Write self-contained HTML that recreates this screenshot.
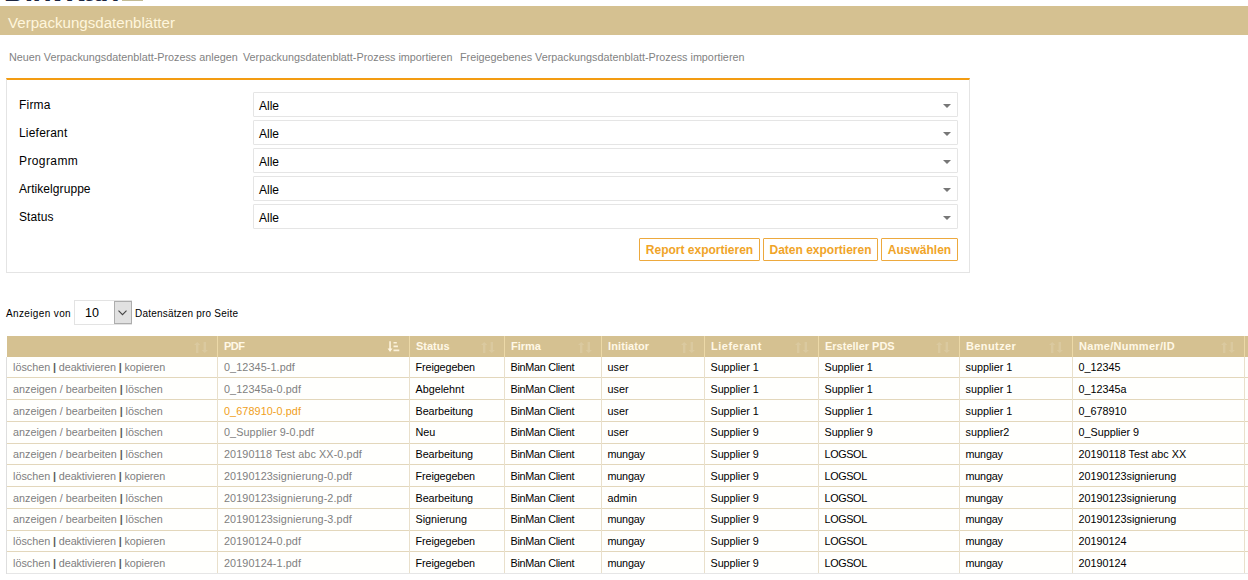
<!DOCTYPE html><html lang="de"><head><meta charset="utf-8"><title>Verpackungsdatenblätter</title><style>
html,body{margin:0;padding:0;background:#fff;}
body{width:1248px;height:580px;overflow:hidden;position:relative;font-family:"Liberation Sans",sans-serif;color:#000;}
.abs{position:absolute;}
#logo{left:4px;top:-26px;font-size:32px;font-weight:bold;color:#1b2440;line-height:32px;white-space:nowrap;width:130px;height:32px;}
#logo span{position:absolute;top:0;transform-origin:0 0;display:block;}
#logosq{left:122px;top:0;width:21px;height:1px;background:#c2bb94;}
#bar{left:0;top:6px;width:1248px;height:29px;background:#d5c191;}
#title{left:8px;top:14px;font-size:15.1px;line-height:18px;color:#fff6dd;white-space:nowrap;}
.lnk{top:50px;font-size:10.8px;line-height:14px;color:#828282;white-space:nowrap;}
#box{left:6px;top:78px;width:962px;height:192px;border:1px solid #e4e4e4;border-top:2px solid #f39c12;}
.lbl{left:19px;letter-spacing:.2px;font-size:12px;line-height:14px;white-space:nowrap;}
.sel{left:253px;width:703px;height:23px;border:1px solid #e5e5e5;border-radius:1px;background:#fff;}
.sel span{position:absolute;left:5px;top:6px;font-size:12px;line-height:14px;}
.sel i{position:absolute;right:6px;top:11px;width:0;height:0;border-left:4px solid transparent;border-right:4px solid transparent;border-top:4px solid #777;}
.btn{top:238px;height:21px;border:1px solid #eda93e;border-radius:1px;font-size:12px;font-weight:bold;color:#f0a428;line-height:23px;text-align:center;white-space:nowrap;background:#fff;}
#anz{left:6px;top:307px;font-size:10px;line-height:13px;white-space:nowrap;letter-spacing:0.37px;}
#anz2{left:135px;top:307px;font-size:10px;line-height:13px;white-space:nowrap;letter-spacing:0.2px;}
#psel{left:74px;top:300px;width:56px;height:23px;border:1px solid #e3e3e3;background:#fff;}
#psel span{position:absolute;left:10px;top:5px;font-size:12.5px;line-height:14px;}
#psel b{position:absolute;left:39px;top:0px;width:16px;height:21px;border:1px solid #adadad;background:#e1e1e1;}
#thead{left:7px;top:336px;width:1241px;height:21px;background:#d5c191;}
.th{top:336px;height:21px;font-size:11px;font-weight:bold;color:#fff8e6;line-height:21px;white-space:nowrap;}
.vsep{top:357px;width:1px;height:217px;background:#e9e0cb;}
.vseph{top:336px;width:1px;height:21px;background:#ecd9a8;}
.hsep{left:7px;width:1241px;height:1px;background:#e3d7bb;}
.td{font-size:10.8px;line-height:13px;white-space:nowrap;color:#000;}
.td a{color:#808080;}
.td .bar{color:#5a5a5a;font-weight:bold;margin:0 2.8px;letter-spacing:0;}
.td.a .n{letter-spacing:-0.1px;}
.td.g{color:#808080;letter-spacing:.1px;}
.td.o{color:#f0a020;letter-spacing:.1px;}
.si{top:342px;width:14px;height:11px;opacity:.13;}
</style></head><body>
<div id="logo" class="abs"><span style="left:0;transform:scaleX(.84)">B</span><span style="left:20.4px">i</span><span style="left:28.3px">n</span><span style="left:47.8px;transform:scaleX(1.32)">M</span><span style="left:79.2px">a</span><span style="left:96px">n</span></div><div id="logosq" class="abs"></div>
<div id="bar" class="abs"></div><div id="title" class="abs">Verpackungsdatenblätter</div>
<div class="abs lnk" style="left:9px">Neuen Verpackungsdatenblatt-Prozess anlegen</div>
<div class="abs lnk" style="left:243px">Verpackungsdatenblatt-Prozess importieren</div>
<div class="abs lnk" style="left:460px">Freigegebenes Verpackungsdatenblatt-Prozess importieren</div>
<div id="box" class="abs"></div>
<div class="abs lbl" style="top:98px;letter-spacing:0.2px">Firma</div>
<div class="abs sel" style="top:92px"><span>Alle</span><i></i></div>
<div class="abs lbl" style="top:126px;letter-spacing:0.2px">Lieferant</div>
<div class="abs sel" style="top:120px"><span>Alle</span><i></i></div>
<div class="abs lbl" style="top:154px;letter-spacing:0.4px">Programm</div>
<div class="abs sel" style="top:148px"><span>Alle</span><i></i></div>
<div class="abs lbl" style="top:182px;letter-spacing:0.07px">Artikelgruppe</div>
<div class="abs sel" style="top:176px"><span>Alle</span><i></i></div>
<div class="abs lbl" style="top:210px;letter-spacing:0.1px">Status</div>
<div class="abs sel" style="top:204px"><span>Alle</span><i></i></div>
<div class="abs btn" style="left:639px;width:119px">Report exportieren</div>
<div class="abs btn" style="left:763px;width:113px">Daten exportieren</div>
<div class="abs btn" style="left:881px;width:75px">Auswählen</div>
<div id="anz" class="abs">Anzeigen von</div>
<div id="psel" class="abs"><span>10</span><b><svg width="16" height="21" viewBox="0 0 16 21"><path d="M3.5 8.6 L7.5 12.6 L11.5 8.6" fill="none" stroke="#444" stroke-width="1.1"/></svg></b></div>
<div id="anz2" class="abs">Datensätzen pro Seite</div>
<div id="thead" class="abs"></div><div class="abs" style="left:7px;top:357px;width:1241px;height:216px;background:#fffffd"></div>
<div class="abs th" style="left:224px;letter-spacing:-0.5px">PDF</div>
<div class="abs th" style="left:416px;letter-spacing:0px">Status</div>
<div class="abs th" style="left:511px;letter-spacing:0px">Firma</div>
<div class="abs th" style="left:608px;letter-spacing:0.1px">Initiator</div>
<div class="abs th" style="left:711px;letter-spacing:0.5px">Lieferant</div>
<div class="abs th" style="left:825px;letter-spacing:0px">Ersteller PDS</div>
<div class="abs th" style="left:966px;letter-spacing:0.4px">Benutzer</div>
<div class="abs th" style="left:1079px;letter-spacing:0.3px">Name/Nummer/ID</div>
<svg class="abs si" style="left:194px" viewBox="0 0 14 11"><path d="M2 11V3H0L3.2 0l3.2 3h-2v8zM9.6 0v8h-2l3.2 3L14 8h-2V0z" fill="#fff"/></svg>
<svg class="abs si" style="left:481px" viewBox="0 0 14 11"><path d="M2 11V3H0L3.2 0l3.2 3h-2v8zM9.6 0v8h-2l3.2 3L14 8h-2V0z" fill="#fff"/></svg>
<svg class="abs si" style="left:578px" viewBox="0 0 14 11"><path d="M2 11V3H0L3.2 0l3.2 3h-2v8zM9.6 0v8h-2l3.2 3L14 8h-2V0z" fill="#fff"/></svg>
<svg class="abs si" style="left:681px" viewBox="0 0 14 11"><path d="M2 11V3H0L3.2 0l3.2 3h-2v8zM9.6 0v8h-2l3.2 3L14 8h-2V0z" fill="#fff"/></svg>
<svg class="abs si" style="left:795px" viewBox="0 0 14 11"><path d="M2 11V3H0L3.2 0l3.2 3h-2v8zM9.6 0v8h-2l3.2 3L14 8h-2V0z" fill="#fff"/></svg>
<svg class="abs si" style="left:936px" viewBox="0 0 14 11"><path d="M2 11V3H0L3.2 0l3.2 3h-2v8zM9.6 0v8h-2l3.2 3L14 8h-2V0z" fill="#fff"/></svg>
<svg class="abs si" style="left:1049px" viewBox="0 0 14 11"><path d="M2 11V3H0L3.2 0l3.2 3h-2v8zM9.6 0v8h-2l3.2 3L14 8h-2V0z" fill="#fff"/></svg>
<svg class="abs si" style="left:1221px" viewBox="0 0 14 11"><path d="M2 11V3H0L3.2 0l3.2 3h-2v8zM9.6 0v8h-2l3.2 3L14 8h-2V0z" fill="#fff"/></svg>
<svg class="abs" style="left:386px;top:340px;width:14px;height:13px" viewBox="0 0 14 13"><path d="M3.3 1.3h1.5v7.2h1.7L4.05 11.9 1.6 8.5h1.7z" fill="#fff6e2"/><path d="M7.5 2h3.3v1.6H7.5zM7.5 5.6h4.4v1.7H7.5zM7.5 9.4h5.8v1.9H7.5z" fill="#fff6e2" opacity=".9"/></svg>
<div class="abs hsep" style="top:377px"></div>
<div class="abs td a" style="left:13px;top:361px"><a>löschen</a><span class="bar">|</span><a class="n">deaktivieren</a><span class="bar">|</span><a class="n">kopieren</a></div>
<div class="abs td g" style="left:224px;top:361px">0_12345-1.pdf</div>
<div class="abs td" style="left:415.5px;top:361px;letter-spacing:-0.1px">Freigegeben</div>
<div class="abs td" style="left:510.5px;top:361px;letter-spacing:-0.27px">BinMan Client</div>
<div class="abs td" style="left:607.5px;top:361px">user</div>
<div class="abs td" style="left:710.5px;top:361px;letter-spacing:-0.05px">Supplier 1</div>
<div class="abs td" style="left:824.5px;top:361px;letter-spacing:-0.05px">Supplier 1</div>
<div class="abs td" style="left:965.5px;top:361px">supplier 1</div>
<div class="abs td" style="left:1078.5px;top:361px">0_12345</div>
<div class="abs hsep" style="top:399px"></div>
<div class="abs td a" style="left:13px;top:383px"><a>anzeigen / bearbeiten</a><span class="bar">|</span><a>löschen</a></div>
<div class="abs td g" style="left:224px;top:383px">0_12345a-0.pdf</div>
<div class="abs td" style="left:415.5px;top:383px">Abgelehnt</div>
<div class="abs td" style="left:510.5px;top:383px;letter-spacing:-0.27px">BinMan Client</div>
<div class="abs td" style="left:607.5px;top:383px">user</div>
<div class="abs td" style="left:710.5px;top:383px;letter-spacing:-0.05px">Supplier 1</div>
<div class="abs td" style="left:824.5px;top:383px;letter-spacing:-0.05px">Supplier 1</div>
<div class="abs td" style="left:965.5px;top:383px">supplier 1</div>
<div class="abs td" style="left:1078.5px;top:383px">0_12345a</div>
<div class="abs hsep" style="top:421px"></div>
<div class="abs td a" style="left:13px;top:405px"><a>anzeigen / bearbeiten</a><span class="bar">|</span><a>löschen</a></div>
<div class="abs td o" style="left:224px;top:405px">0_678910-0.pdf</div>
<div class="abs td" style="left:415.5px;top:405px;letter-spacing:-0.06px">Bearbeitung</div>
<div class="abs td" style="left:510.5px;top:405px;letter-spacing:-0.27px">BinMan Client</div>
<div class="abs td" style="left:607.5px;top:405px">user</div>
<div class="abs td" style="left:710.5px;top:405px;letter-spacing:-0.05px">Supplier 1</div>
<div class="abs td" style="left:824.5px;top:405px;letter-spacing:-0.05px">Supplier 1</div>
<div class="abs td" style="left:965.5px;top:405px">supplier 1</div>
<div class="abs td" style="left:1078.5px;top:405px">0_678910</div>
<div class="abs hsep" style="top:443px"></div>
<div class="abs td a" style="left:13px;top:426px"><a>anzeigen / bearbeiten</a><span class="bar">|</span><a>löschen</a></div>
<div class="abs td g" style="left:224px;top:426px">0_Supplier 9-0.pdf</div>
<div class="abs td" style="left:415.5px;top:426px">Neu</div>
<div class="abs td" style="left:510.5px;top:426px;letter-spacing:-0.27px">BinMan Client</div>
<div class="abs td" style="left:607.5px;top:426px">user</div>
<div class="abs td" style="left:710.5px;top:426px;letter-spacing:-0.05px">Supplier 9</div>
<div class="abs td" style="left:824.5px;top:426px;letter-spacing:-0.05px">Supplier 9</div>
<div class="abs td" style="left:965.5px;top:426px">supplier2</div>
<div class="abs td" style="left:1078.5px;top:426px">0_Supplier 9</div>
<div class="abs hsep" style="top:464px"></div>
<div class="abs td a" style="left:13px;top:448px"><a>anzeigen / bearbeiten</a><span class="bar">|</span><a>löschen</a></div>
<div class="abs td g" style="left:224px;top:448px">20190118 Test abc XX-0.pdf</div>
<div class="abs td" style="left:415.5px;top:448px;letter-spacing:-0.06px">Bearbeitung</div>
<div class="abs td" style="left:510.5px;top:448px;letter-spacing:-0.27px">BinMan Client</div>
<div class="abs td" style="left:607.5px;top:448px;letter-spacing:-0.2px">mungay</div>
<div class="abs td" style="left:710.5px;top:448px;letter-spacing:-0.05px">Supplier 9</div>
<div class="abs td" style="left:824.5px;top:448px;letter-spacing:-0.35px">LOGSOL</div>
<div class="abs td" style="left:965.5px;top:448px;letter-spacing:-0.2px">mungay</div>
<div class="abs td" style="left:1078.5px;top:448px">20190118 Test abc XX</div>
<div class="abs hsep" style="top:486px"></div>
<div class="abs td a" style="left:13px;top:470px"><a>löschen</a><span class="bar">|</span><a class="n">deaktivieren</a><span class="bar">|</span><a class="n">kopieren</a></div>
<div class="abs td g" style="left:224px;top:470px">20190123signierung-0.pdf</div>
<div class="abs td" style="left:415.5px;top:470px;letter-spacing:-0.1px">Freigegeben</div>
<div class="abs td" style="left:510.5px;top:470px;letter-spacing:-0.27px">BinMan Client</div>
<div class="abs td" style="left:607.5px;top:470px;letter-spacing:-0.2px">mungay</div>
<div class="abs td" style="left:710.5px;top:470px;letter-spacing:-0.05px">Supplier 9</div>
<div class="abs td" style="left:824.5px;top:470px;letter-spacing:-0.35px">LOGSOL</div>
<div class="abs td" style="left:965.5px;top:470px;letter-spacing:-0.2px">mungay</div>
<div class="abs td" style="left:1078.5px;top:470px">20190123signierung</div>
<div class="abs hsep" style="top:508px"></div>
<div class="abs td a" style="left:13px;top:492px"><a>anzeigen / bearbeiten</a><span class="bar">|</span><a>löschen</a></div>
<div class="abs td g" style="left:224px;top:492px">20190123signierung-2.pdf</div>
<div class="abs td" style="left:415.5px;top:492px;letter-spacing:-0.06px">Bearbeitung</div>
<div class="abs td" style="left:510.5px;top:492px;letter-spacing:-0.27px">BinMan Client</div>
<div class="abs td" style="left:607.5px;top:492px">admin</div>
<div class="abs td" style="left:710.5px;top:492px;letter-spacing:-0.05px">Supplier 9</div>
<div class="abs td" style="left:824.5px;top:492px;letter-spacing:-0.35px">LOGSOL</div>
<div class="abs td" style="left:965.5px;top:492px;letter-spacing:-0.2px">mungay</div>
<div class="abs td" style="left:1078.5px;top:492px">20190123signierung</div>
<div class="abs hsep" style="top:530px"></div>
<div class="abs td a" style="left:13px;top:513px"><a>anzeigen / bearbeiten</a><span class="bar">|</span><a>löschen</a></div>
<div class="abs td g" style="left:224px;top:513px">20190123signierung-3.pdf</div>
<div class="abs td" style="left:415.5px;top:513px">Signierung</div>
<div class="abs td" style="left:510.5px;top:513px;letter-spacing:-0.27px">BinMan Client</div>
<div class="abs td" style="left:607.5px;top:513px;letter-spacing:-0.2px">mungay</div>
<div class="abs td" style="left:710.5px;top:513px;letter-spacing:-0.05px">Supplier 9</div>
<div class="abs td" style="left:824.5px;top:513px;letter-spacing:-0.35px">LOGSOL</div>
<div class="abs td" style="left:965.5px;top:513px;letter-spacing:-0.2px">mungay</div>
<div class="abs td" style="left:1078.5px;top:513px">20190123signierung</div>
<div class="abs hsep" style="top:551px"></div>
<div class="abs td a" style="left:13px;top:535px"><a>löschen</a><span class="bar">|</span><a class="n">deaktivieren</a><span class="bar">|</span><a class="n">kopieren</a></div>
<div class="abs td g" style="left:224px;top:535px">20190124-0.pdf</div>
<div class="abs td" style="left:415.5px;top:535px;letter-spacing:-0.1px">Freigegeben</div>
<div class="abs td" style="left:510.5px;top:535px;letter-spacing:-0.27px">BinMan Client</div>
<div class="abs td" style="left:607.5px;top:535px;letter-spacing:-0.2px">mungay</div>
<div class="abs td" style="left:710.5px;top:535px;letter-spacing:-0.05px">Supplier 9</div>
<div class="abs td" style="left:824.5px;top:535px;letter-spacing:-0.35px">LOGSOL</div>
<div class="abs td" style="left:965.5px;top:535px;letter-spacing:-0.2px">mungay</div>
<div class="abs td" style="left:1078.5px;top:535px">20190124</div>
<div class="abs hsep" style="top:573px"></div>
<div class="abs td a" style="left:13px;top:557px"><a>löschen</a><span class="bar">|</span><a class="n">deaktivieren</a><span class="bar">|</span><a class="n">kopieren</a></div>
<div class="abs td g" style="left:224px;top:557px">20190124-1.pdf</div>
<div class="abs td" style="left:415.5px;top:557px;letter-spacing:-0.1px">Freigegeben</div>
<div class="abs td" style="left:510.5px;top:557px;letter-spacing:-0.27px">BinMan Client</div>
<div class="abs td" style="left:607.5px;top:557px;letter-spacing:-0.2px">mungay</div>
<div class="abs td" style="left:710.5px;top:557px;letter-spacing:-0.05px">Supplier 9</div>
<div class="abs td" style="left:824.5px;top:557px;letter-spacing:-0.35px">LOGSOL</div>
<div class="abs td" style="left:965.5px;top:557px;letter-spacing:-0.2px">mungay</div>
<div class="abs td" style="left:1078.5px;top:557px">20190124</div>
<div class="abs vsep" style="left:6px;background:#dedede"></div>
<div class="abs vsep" style="left:217px"></div><div class="abs vseph" style="left:217px"></div>
<div class="abs vsep" style="left:409px"></div><div class="abs vseph" style="left:409px"></div>
<div class="abs vsep" style="left:504px"></div><div class="abs vseph" style="left:504px"></div>
<div class="abs vsep" style="left:601px"></div><div class="abs vseph" style="left:601px"></div>
<div class="abs vsep" style="left:704px"></div><div class="abs vseph" style="left:704px"></div>
<div class="abs vsep" style="left:818px"></div><div class="abs vseph" style="left:818px"></div>
<div class="abs vsep" style="left:959px"></div><div class="abs vseph" style="left:959px"></div>
<div class="abs vsep" style="left:1072px"></div><div class="abs vseph" style="left:1072px"></div>
<div class="abs vsep" style="left:1244px"></div><div class="abs vseph" style="left:1244px"></div>
<div class="abs hsep" style="top:573px;background:#e6e6e6"></div>
</body></html>
